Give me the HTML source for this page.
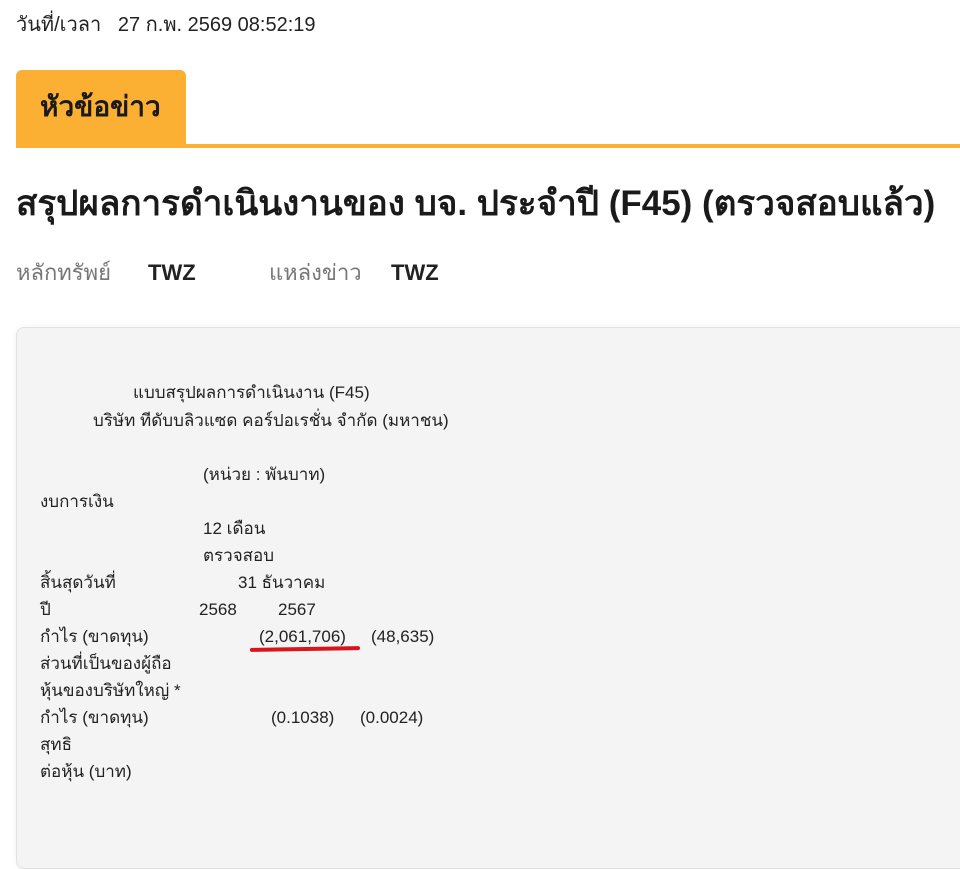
<!DOCTYPE html>
<html><head><meta charset="utf-8"><style>
body{margin:0;width:960px;height:841px;overflow:hidden;background:#fff;font-family:"Liberation Sans","DejaVu Sans",sans-serif;color:#222;position:relative}
.a{position:absolute;white-space:pre;line-height:22px}
.s{font-size:17px}
</style></head><body>
<div class="a" style="left:16px;top:14px;font-size:20px">วันที่/เวลา   27 ก.พ. 2569 08:52:19</div>
<div style="position:absolute;left:16px;top:70px;width:170px;height:78px;background:#fbb034;border-radius:6px 6px 0 0"></div>
<div style="position:absolute;left:16px;top:144px;width:944px;height:4px;background:#fbb034"></div>
<div class="a" style="left:40px;top:92px;font-size:28px;font-weight:bold;line-height:30px;color:#1a1a1a">หัวข้อข่าว</div>
<div class="a" style="left:16px;top:184px;font-size:35px;font-weight:bold;line-height:40px;color:#1a1a1a">สรุปผลการดำเนินงานของ บจ. ประจำปี (F45) (ตรวจสอบแล้ว)</div>
<div class="a" style="left:16px;top:262px;font-size:22px;color:#777">หลักทรัพย์</div>
<div class="a" style="left:148px;top:262px;font-size:22px;font-weight:bold;color:#222">TWZ</div>
<div class="a" style="left:269px;top:262px;font-size:22px;color:#777">แหล่งข่าว</div>
<div class="a" style="left:391px;top:262px;font-size:22px;font-weight:bold;color:#222">TWZ</div>
<div style="position:absolute;left:16px;top:327px;width:960px;height:540px;background:#f4f4f4;border:1px solid #e2e2e2;border-radius:8px;box-shadow:0 0 6px rgba(0,0,0,.06)"></div>
<div class="a s" style="left:133px;top:382px">แบบสรุปผลการดำเนินงาน (F45)</div>
<div class="a s" style="left:93px;top:410px">บริษัท ทีดับบลิวแซด คอร์ปอเรชั่น จำกัด (มหาชน)</div>
<div class="a s" style="left:203px;top:464px">(หน่วย : พันบาท)</div>
<div class="a s" style="left:40px;top:491px">งบการเงิน</div>
<div class="a s" style="left:203px;top:518px">12 เดือน</div>
<div class="a s" style="left:203px;top:545px">ตรวจสอบ</div>
<div class="a s" style="left:40px;top:572px">สิ้นสุดวันที่</div>
<div class="a s" style="left:238px;top:572px">31 ธันวาคม</div>
<div class="a s" style="left:40px;top:599px">ปี</div>
<div class="a s" style="left:199px;top:599px">2568</div>
<div class="a s" style="left:278px;top:599px">2567</div>
<div class="a s" style="left:40px;top:626px">กำไร (ขาดทุน)</div>
<div class="a s" style="left:259px;top:626px">(2,061,706)</div>
<div class="a s" style="left:371px;top:626px">(48,635)</div>
<div style="position:absolute;left:250px;top:647px;width:110px;height:4px;background:#d9141b;border-radius:2px;transform:rotate(-1deg)"></div>
<div class="a s" style="left:40px;top:653px">ส่วนที่เป็นของผู้ถือ</div>
<div class="a s" style="left:40px;top:680px">หุ้นของบริษัทใหญ่ *</div>
<div class="a s" style="left:40px;top:707px">กำไร (ขาดทุน)</div>
<div class="a s" style="left:271px;top:707px">(0.1038)</div>
<div class="a s" style="left:360px;top:707px">(0.0024)</div>
<div class="a s" style="left:40px;top:734px">สุทธิ</div>
<div class="a s" style="left:40px;top:761px">ต่อหุ้น (บาท)</div>
</body></html>
